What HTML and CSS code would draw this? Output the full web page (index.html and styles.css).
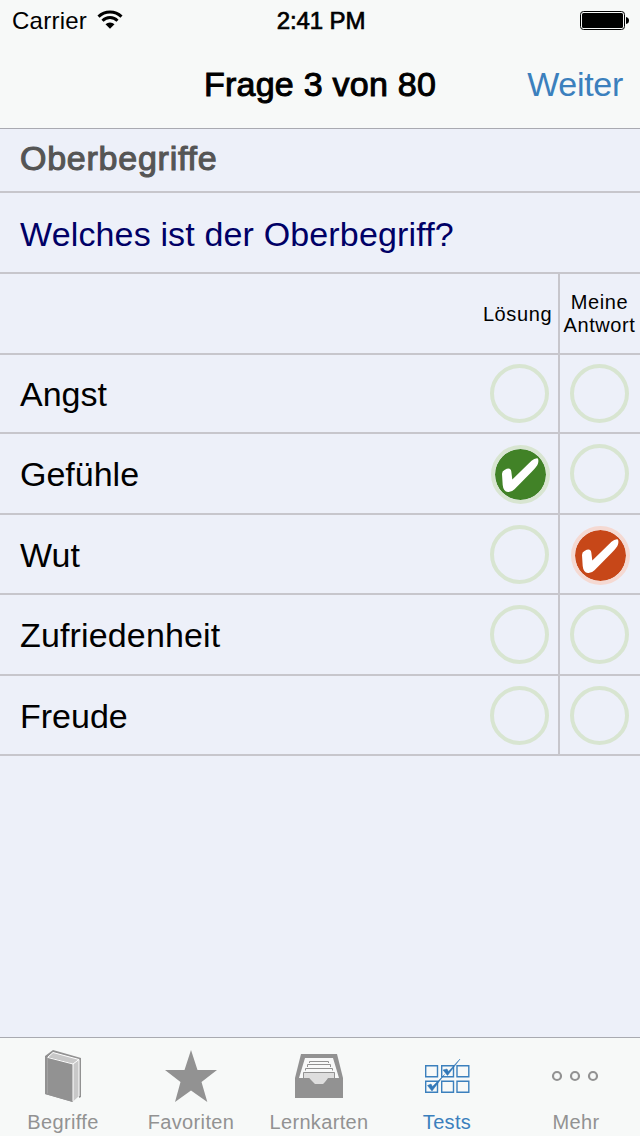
FILE: index.html
```html
<!DOCTYPE html>
<html lang="de">
<head>
<meta charset="utf-8">
<title>Frage 3 von 80</title>
<link rel="stylesheet" href="styles.css">
</head>
<body>
<svg class="defs" width="0" height="0">
  <symbol id="check" viewBox="0 0 59 59">
    <path d="M11 29Q11 26 13.500 25Q19.500 21.500 20.300 26.500L21.300 34.500L40.500 15.800Q43.500 13 46.500 13.300Q48 14.500 47 18.500Q46 21.500 41 26.500L23.500 44.200Q20.500 47.300 17 47Q12.300 46.500 11.700 40Z" fill="#fff"/>
  </symbol>
</svg>
<div class="screen">
  <header class="top">
    <div class="status">
      <div class="carrier"><span>Carrier</span>
        <svg class="wifi" width="26" height="20" viewBox="0 0 26 20">
          <path d="M1.500 6.600A16.500 16.500 0 0 1 24.500 6.600M5.500 10.700A10.600 10.600 0 0 1 20.500 10.700" fill="none" stroke="#000" stroke-width="3"/>
          <path d="M8.500 14.200A6.500 6.500 0 0 1 17.500 14.200L13 18.800Z" fill="#000"/>
        </svg>
      </div>
      <div class="clock">2:41 PM</div>
      <svg class="battery" width="50" height="19" viewBox="0 0 50 19">
        <rect x=".5" y=".5" width="44" height="18" rx="3" fill="none" stroke="#000"/>
        <rect x="2" y="2" width="41" height="15" rx="1.500" fill="#000"/>
        <path d="M46 6Q49 6.500 49 9.500T46 13Z" fill="#000"/>
      </svg>
    </div>
    <div class="nav"><span></span><h1>Frage 3 von 80</h1><a class="next">Weiter</a></div>
  </header>
  <main>
    <h2 class="section">Oberbegriffe</h2>
    <p class="question">Welches ist der Oberbegriff?</p>
    <div class="row head"><div class="name"></div><div class="cell first"><span class="hl">Lösung</span></div><div class="cell"><span class="hl">Meine<br>Antwort</span></div></div>
    <div class="row r1"><div class="name">Angst</div><div class="cell first"><i class="ring"></i></div><div class="cell"><i class="ring"></i></div></div>
    <div class="row"><div class="name">Gefühle</div><div class="cell first"><i class="ring right"><svg><use href="#check"/></svg></i></div><div class="cell"><i class="ring"></i></div></div>
    <div class="row r3"><div class="name">Wut</div><div class="cell first"><i class="ring"></i></div><div class="cell"><i class="ring wrong"><svg><use href="#check"/></svg></i></div></div>
    <div class="row"><div class="name wide">Zufriedenheit</div><div class="cell first"><i class="ring"></i></div><div class="cell"><i class="ring"></i></div></div>
    <div class="row r5"><div class="name">Freude</div><div class="cell first"><i class="ring"></i></div><div class="cell"><i class="ring"></i></div></div>
  </main>
  <nav class="tabs">
    <div class="tab">
      <svg width="60" height="60" viewBox="33 1046 60 60">
        <path d="M45 1056L53 1050L81 1058V1097L79 1098V1060L53 1053L48 1057L73 1064V1102L45 1094Z" fill="#929292"/>
        <path d="M48 1057L53 1052.500L79 1059.500V1096L73 1101.500V1064Z" fill="#c8c8c8"/>
        <path d="M45 1056L72.500 1063.500V1102L45 1094Z" fill="#929292"/>
        <path d="M47.500 1057.500L53 1052.500L79 1059.500V1096M48 1057.500L73 1064V1101.500M73 1064L79 1059.500" fill="none" stroke="#fff" stroke-width="1"/>
        <path d="M47.500 1058V1093.500" stroke="#a2a2a2"/>
      </svg><span>Begriffe</span></div>
    <div class="tab">
      <svg width="60" height="60" viewBox="161 1046 60 60"><path d="M191 1050L197.500 1070H217L201.500 1082L207.300 1102L191 1090.500L175 1102L180.500 1082L165 1070H184.500Z" fill="#929292"/></svg><span>Favoriten</span></div>
    <div class="tab">
      <svg width="60" height="60" viewBox="289 1046 60 60">
        <path d="M301 1054H337L343 1078V1098H295V1078Z" fill="#929292"/>
        <path d="M305 1058H333L339 1078H335V1072H303V1078H299Z" fill="#f8f9f9"/>
        <path d="M303 1072H335V1078H329L323 1084H315L309 1078H303Z" fill="#dedede"/>
        <path d="M303.500 1078V1072.500H334.500V1078M305.500 1070.500V1068.500H332.500V1070.500M307.500 1067V1064.500H330.500V1067M309.500 1063V1061.500H328.500V1063" fill="none" stroke="#929292"/>
        <path d="M295 1078H309L314 1084H324L328 1078H343V1098H295Z" fill="#929292"/>
      </svg><span>Lernkarten</span></div>
    <div class="tab active">
      <svg width="60" height="60" viewBox="417 1046 60 60">
        <g fill="none" stroke="#3b80bd" stroke-width="1.400"><path d="M425.700 1065.700h11.800v11h-11.800zM441.700 1065.700h11.800v11h-11.800zM457 1065.700h11.800v11h-11.800zM425.700 1081.200h11.800v11h-11.800zM441.700 1081.200h11.800v11h-11.800zM457 1081.200h11.800v11h-11.800z"/></g>
        <path d="M443 1070L447 1069L448.500 1071.500L460 1059L447.500 1075.500ZM427.500 1085.500L431 1084L432.500 1086.500L444.500 1074.500L432 1091Z" fill="#3278b8" stroke="#3278b8" stroke-width=".5"/>
      </svg><span>Tests</span></div>
    <div class="tab more">
      <svg width="60" height="60" viewBox="545 1046 60 60"><g fill="none" stroke="#929292" stroke-width="2.200"><circle cx="556" cy="1076" r="4"/><circle cx="574" cy="1076" r="4"/><circle cx="592" cy="1076" r="4"/></g></svg><span>Mehr</span></div>
  </nav>
</div>
</body>
</html>
```
FILE: styles.css
```css
* { box-sizing: border-box; }
body { margin: 0; font-family: "Liberation Sans", Arial, sans-serif; color: #000; }
h1, h2, p { margin: 0; font-weight: 400; }
svg { display: block; }
.defs { position: absolute; }
.screen { width: 640px; height: 1136px; display: flex; flex-direction: column; background: #edf0f9; }
.top { height: 129px; background: #f7f9f8; border-bottom: 1px solid #a9aab1; }
.status { height: 40px; padding: 0 10px 0 12px; display: grid; grid-template-columns: 1fr auto 1fr; align-items: center; font-size: 24px; }
.carrier { display: flex; align-items: center; letter-spacing: .25px; padding-top: 1px; }
.wifi { margin: -1px 0 0 10px; }
.clock { -webkit-text-stroke: .7px; letter-spacing: -.1px; padding-top: 1px; }
.battery { justify-self: end; margin-top: 1px; }
.nav { height: 88px; padding: 0 17px; display: grid; grid-template-columns: 1fr auto 1fr; align-items: center; font-size: 34px; }
.nav h1 { font-size: 34px; -webkit-text-stroke: 1px; letter-spacing: .25px; }
.next { justify-self: end; color: #3b80bd; letter-spacing: -.3px; }
.section { height: 64px; padding: 9px 20px 0; font-size: 34px; line-height: 40px; color: #555; -webkit-text-stroke: 1.1px; letter-spacing: .75px; border-bottom: 2px solid #c7c6cc; }
.question { height: 81px; padding: 21px 20px 0; font-size: 34px; line-height: 40px; letter-spacing: .15px; color: #000066; border-bottom: 2px solid #c7c6cc; }
main { flex: 1; }
.row { display: flex; height: 81px; border-bottom: 2px solid #c7c6cc; font-size: 34px; }
.row.r1 { height: 79px; }
.row.r3, .row.r5 { height: 80px; }
.name { width: 480px; padding: 2px 0 0 20px; display: flex; align-items: center; }
.wide { letter-spacing: .15px; }
.cell { width: 80px; display: flex; align-items: center; justify-content: center; }
.first { border-right: 2px solid #c7c6cc; }
.hl { font-size: 20px; line-height: 23px; text-align: center; letter-spacing: .6px; padding-top: 1px; margin-right: 1px; }
.first .hl { margin-right: 3px; }
.ring { width: 59px; height: 59px; border: 4px solid #d8e5d1; border-radius: 50%; flex: none; margin-right: 1px; }
.first .ring { margin-right: -1px; }
.ring svg { width: 59px; height: 59px; margin: -4px; }
.first .ring.right { background: #418227; background-clip: padding-box; margin: 1px -3px 0 0; }
.ring.wrong { background: #c74718; background-clip: padding-box; border-color: #f5d9d2; margin: 2px -1px 0 0; }
.tabs { height: 99px; display: flex; background: #f7f9f8; border-top: 1px solid #a9aab1; }
.tab { width: 128px; padding: 8px 2px 0 0; display: flex; flex-direction: column; align-items: center; font-size: 20px; line-height: 24px; letter-spacing: .35px; color: #929292; }
.tab span { margin-top: 4px; }
.more { padding-right: 0; }
.tab.active { color: #3b80bd; }
```
